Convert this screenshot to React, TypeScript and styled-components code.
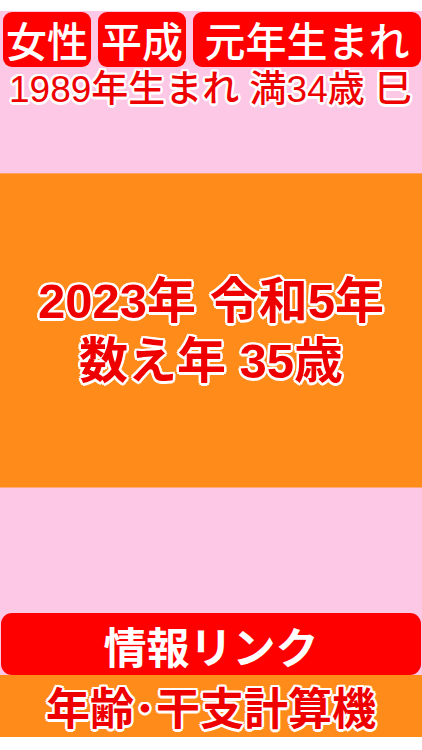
import React from 'react'
import styled, {createGlobalStyle} from 'styled-components'

const GlobalStyle = createGlobalStyle`
  html, body {
    margin: 0;
    padding: 0;
    background: #fff;
  }
  body {
    font-family: "Liberation Sans", "Noto Sans CJK JP", sans-serif;
  }
`

const outline = `
  text-shadow:
    2.5px 0 0 #fff, -2.5px 0 0 #fff, 0 2.5px 0 #fff, 0 -2.5px 0 #fff,
    1.8px 1.8px 0 #fff, -1.8px 1.8px 0 #fff, 1.8px -1.8px 0 #fff, -1.8px -1.8px 0 #fff;
`

const Page = styled.div`
  width: 422px;
  height: 750px;
  display: flex;
  flex-direction: column;
  background: #fff;
`

const Header = styled.div`
  margin-top: 11px;
  height: 162px;
  background: #fdc8e6;
  display: flex;
  flex-direction: column;
`

const BadgeRow = styled.div`
  display: flex;
  gap: 7px;
  padding: 1px 1px 0 3px;
`

const Badge = styled.div<{$grow?: boolean}>`
  flex: ${p => (p.$grow ? 1 : 'none')};
  height: 55px;
  padding: 0 3px;
  background: #ff0000;
  border-radius: 9px;
  color: #fff;
  font-family: "Noto Sans CJK JP", sans-serif;
  font-size: 41px;
  font-weight: 500;
  line-height: 55px;
  text-align: center;
  white-space: nowrap;
`

const Subtitle = styled.div`
  padding: 1px 0 0 9px;
  color: #ee0000;
  font-size: 37px;
  font-weight: 500;
  line-height: 44px;
  white-space: nowrap;
  ${outline}
`

const Result = styled.div`
  height: 315px;
  background: #ff8c1a;
  border-top: 1px solid #ffa060;
  border-bottom: 1px solid #ffa880;
  box-sizing: border-box;
  display: flex;
  flex-direction: column;
  align-items: center;
  justify-content: center;
`

const ResultLine = styled.div`
  color: #ee0000;
  font-size: 49px;
  font-weight: bold;
  line-height: 60px;
  white-space: nowrap;
  ${outline}
`

const Footer = styled.div`
  flex: 1;
  background: #fdc8e6;
  display: flex;
  flex-direction: column;
  justify-content: flex-end;
`

const LinkButton = styled.button`
  margin: 0 1px;
  height: 62px;
  border: none;
  border-radius: 11px;
  background: #ff0000;
  color: #fff;
  font-family: "Noto Sans CJK JP", sans-serif;
  font-size: 43px;
  font-weight: bold;
  cursor: pointer;
`

const BannerWrap = styled.div`
  background: #fff;
`

const Banner = styled.div`
  height: 62px;
  margin-bottom: 13px;
  background: #ff8c1a;
  display: flex;
  align-items: center;
  justify-content: center;
  color: #ee0000;
  font-family: "Noto Sans CJK JP", sans-serif;
  font-size: 44px;
  font-weight: bold;
  white-space: nowrap;
  ${outline}
`

export default function App() {
  return (
    <>
      <GlobalStyle />
      <Page>
        <Header>
          <BadgeRow>
            <Badge>女性</Badge>
            <Badge>平成</Badge>
            <Badge $grow>元年生まれ</Badge>
          </BadgeRow>
          <Subtitle>1989年生まれ 満34歳 巳</Subtitle>
        </Header>
        <Result>
          <ResultLine>2023年 令和5年</ResultLine>
          <ResultLine>数え年 35歳</ResultLine>
        </Result>
        <Footer>
          <LinkButton type='button'>情報リンク</LinkButton>
        </Footer>
        <BannerWrap>
          <Banner>年齢･干支計算機</Banner>
        </BannerWrap>
      </Page>
    </>
  )
}
